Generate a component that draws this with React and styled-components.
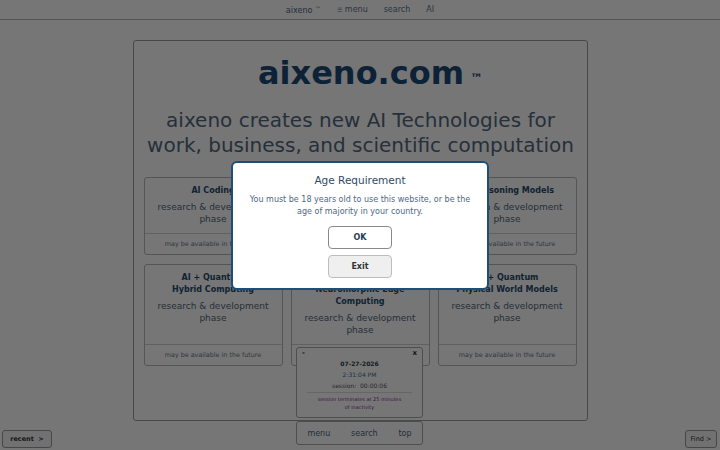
import React from "react";
import styled, { createGlobalStyle } from "styled-components";

const GlobalStyle = createGlobalStyle`
  body {
    margin: 0;
    background: #ffffff;
    font-family: "DejaVu Sans", "Liberation Sans", sans-serif;
  }
`;

const products = [
  { title: ["AI Coding"] },
  { title: ["AI Quantum Agents"] },
  { title: ["AI Reasoning Models"] },
  { title: ["AI + Quantum", "Hybrid Computing"] },
  { title: ["AI + Quantum", "Neuromorphic Edge", "Computing"] },
  { title: ["AI + Quantum", "Physical World Models"] },
];

const App = () => {
  return (
    <>
      <GlobalStyle />
      <TopNav>
        <Brand>
          aixeno <Tm>™</Tm>
        </Brand>
        <NavLink>
          <MenuGlyph>☰</MenuGlyph> menu
        </NavLink>
        <NavLink>search</NavLink>
        <NavLink>AI</NavLink>
      </TopNav>

      <MainCard>
        <Logo>
          aixeno.com<LogoTm>™</LogoTm>
        </Logo>
        <Tagline>
          aixeno creates new AI Technologies for
          <br />
          work, business, and scientific computation
        </Tagline>
        <Grid>
          {products.map((p, i) => (
            <Product key={i}>
              <ProductBody>
                <ProductTitle>
                  {p.title.map((line, j) => (
                    <div key={j}>{line}</div>
                  ))}
                </ProductTitle>
                <ProductStatus>
                  research &amp; development
                  <br />
                  phase
                </ProductStatus>
              </ProductBody>
              <ProductFooter>may be available in the future</ProductFooter>
            </Product>
          ))}
        </Grid>
      </MainCard>

      <SessionBox>
        <SessionHead>
          <span>-</span>
          <span>x</span>
        </SessionHead>
        <SessionDate>07-27-2026</SessionDate>
        <SessionTime>2:31:04 PM</SessionTime>
        <SessionCount>session:&nbsp; 00:00:06</SessionCount>
        <SessionNote>
          session terminates at 25 minutes
          <br />
          of inactivity
        </SessionNote>
      </SessionBox>

      <BottomNav>
        <BottomLink>menu</BottomLink>
        <BottomLink>search</BottomLink>
        <BottomLink>top</BottomLink>
      </BottomNav>

      <CornerButton $side="left">recent &nbsp;&gt;</CornerButton>
      <CornerButton $side="right">Find &gt;</CornerButton>

      <Overlay>
        <Dialog>
          <DialogTitle>Age Requirement</DialogTitle>
          <DialogText>
            You must be 18 years old to use this website, or be the
            <br />
            age of majority in your country.
          </DialogText>
          <DialogButton $primary>OK</DialogButton>
          <DialogButton>Exit</DialogButton>
        </Dialog>
      </Overlay>
    </>
  );
};

const TopNav = styled.nav`
  height: 19px;
  border-bottom: 1px solid #b4b4b4;
  display: flex;
  justify-content: center;
  align-items: center;
  gap: 16px;
  font-size: 8px;
  color: #607890;
`;

const Brand = styled.span`
  color: #4a6a8c;
`;

const Tm = styled.span`
  font-size: 6px;
  vertical-align: 2px;
`;

const NavLink = styled.span`
  color: #5e7288;
`;

const MenuGlyph = styled.span`
  font-size: 6px;
`;

const MainCard = styled.main`
  width: 434px;
  margin: 20px auto 0;
  border: 1px solid #9c9c9c;
  border-radius: 3px;
  padding: 12px 9px 54px 10px;
  display: flex;
  flex-direction: column;
  align-items: center;
`;

const Logo = styled.h1`
  margin: 0 0 0 20px;
  font-size: 32px;
  line-height: 40px;
  font-weight: bold;
  color: #1d4b78;
`;

const LogoTm = styled.span`
  font-size: 13px;
  font-weight: bold;
  vertical-align: 1px;
  margin-left: 6px;
`;

const Tagline = styled.p`
  margin: 9px 0 0;
  font-size: 20px;
  line-height: 25px;
  text-align: center;
  color: #53687e;
`;

const Grid = styled.section`
  margin-top: 19px;
  width: 434px;
  display: grid;
  grid-template-columns: repeat(3, 139px);
  column-gap: 8px;
  row-gap: 9px;
`;

const Product = styled.div`
  border: 1px solid #b8b8b8;
  border-radius: 3px;
  display: flex;
  flex-direction: column;
`;

const ProductBody = styled.div`
  flex: 1;
  padding: 7px 6px 8px;
  text-align: center;
`;

const ProductTitle = styled.div`
  font-size: 8px;
  line-height: 12px;
  font-weight: bold;
  color: #264a6e;
`;

const ProductStatus = styled.div`
  margin-top: 4px;
  font-size: 9px;
  line-height: 12px;
  color: #52667b;
`;

const ProductFooter = styled.div`
  height: 20px;
  border-top: 1px solid #d0d0d0;
  display: flex;
  justify-content: center;
  align-items: center;
  font-size: 6.4px;
  color: #6f7984;
`;

const SessionBox = styled.div`
  position: fixed;
  left: 296px;
  bottom: 32px;
  width: 125px;
  height: 69px;
  border: 1px solid #a8a8a8;
  border-radius: 3px;
  background: #ffffff;
  text-align: center;
  font-size: 6px;
  line-height: 11px;
  color: #555;
`;

const SessionHead = styled.div`
  display: flex;
  justify-content: space-between;
  padding: 0 5px;
  height: 10px;
  line-height: 10px;
  font-size: 7px;
  font-weight: bold;
  color: #333;
`;

const SessionDate = styled.div`
  font-weight: bold;
  color: #2a3a4c;
`;

const SessionTime = styled.div`
  color: #3c6a9a;
`;

const SessionCount = styled.div`
  color: #555;
  margin: 0 10px;
  border-bottom: 1px solid #dcdcdc;
  padding-bottom: 1px;
`;

const SessionNote = styled.div`
  font-size: 5px;
  line-height: 8px;
  color: #8c2a9c;
  padding-top: 2px;
`;

const BottomNav = styled.nav`
  position: fixed;
  left: 296px;
  bottom: 5px;
  width: 125px;
  height: 22px;
  border: 1px solid #a8a8a8;
  border-radius: 3px;
  background: #ffffff;
  display: flex;
  justify-content: space-around;
  align-items: center;
  font-size: 8px;
  color: #4e6680;
`;

const BottomLink = styled.span``;

const CornerButton = styled.button`
  position: fixed;
  bottom: 2px;
  ${(p) => (p.$side === "left" ? "left: 2px; width: 50px;" : "right: 3px; width: 32px;")}
  height: 18px;
  padding: 0;
  border: 1px solid #9a9a9a;
  border-radius: 3px;
  background: #f4f4f4;
  font-family: "DejaVu Sans", sans-serif;
  font-size: 6.5px;
  font-weight: ${(p) => (p.$side === "left" ? "bold" : "normal")};
  color: #333;
`;

const Overlay = styled.div`
  position: fixed;
  inset: 0;
  background: rgba(0, 0, 0, 0.537);
  display: flex;
  justify-content: center;
  align-items: center;
`;

const Dialog = styled.div`
  width: 254px;
  height: 115px;
  padding-top: 10px;
  background: #ffffff;
  border: 2px solid #1e4d78;
  border-radius: 6px;
  display: flex;
  flex-direction: column;
  align-items: center;
`;

const DialogTitle = styled.div`
  font-size: 10.5px;
  line-height: 14px;
  color: #2f4b68;
`;

const DialogText = styled.div`
  margin-top: 7px;
  font-size: 8px;
  line-height: 12px;
  text-align: center;
  color: #4c6884;
`;

const DialogButton = styled.button`
  width: 64px;
  height: 23px;
  margin-top: ${(p) => (p.$primary ? "8px" : "6px")};
  border: 1px solid ${(p) => (p.$primary ? "#8a8a8a" : "#bdbdbd")};
  border-radius: 4px;
  background: ${(p) => (p.$primary ? "#ffffff" : "#efefef")};
  font-family: "DejaVu Sans", sans-serif;
  font-size: 8px;
  font-weight: bold;
  color: ${(p) => (p.$primary ? "#1f3d5e" : "#333")};
`;

export default App;
